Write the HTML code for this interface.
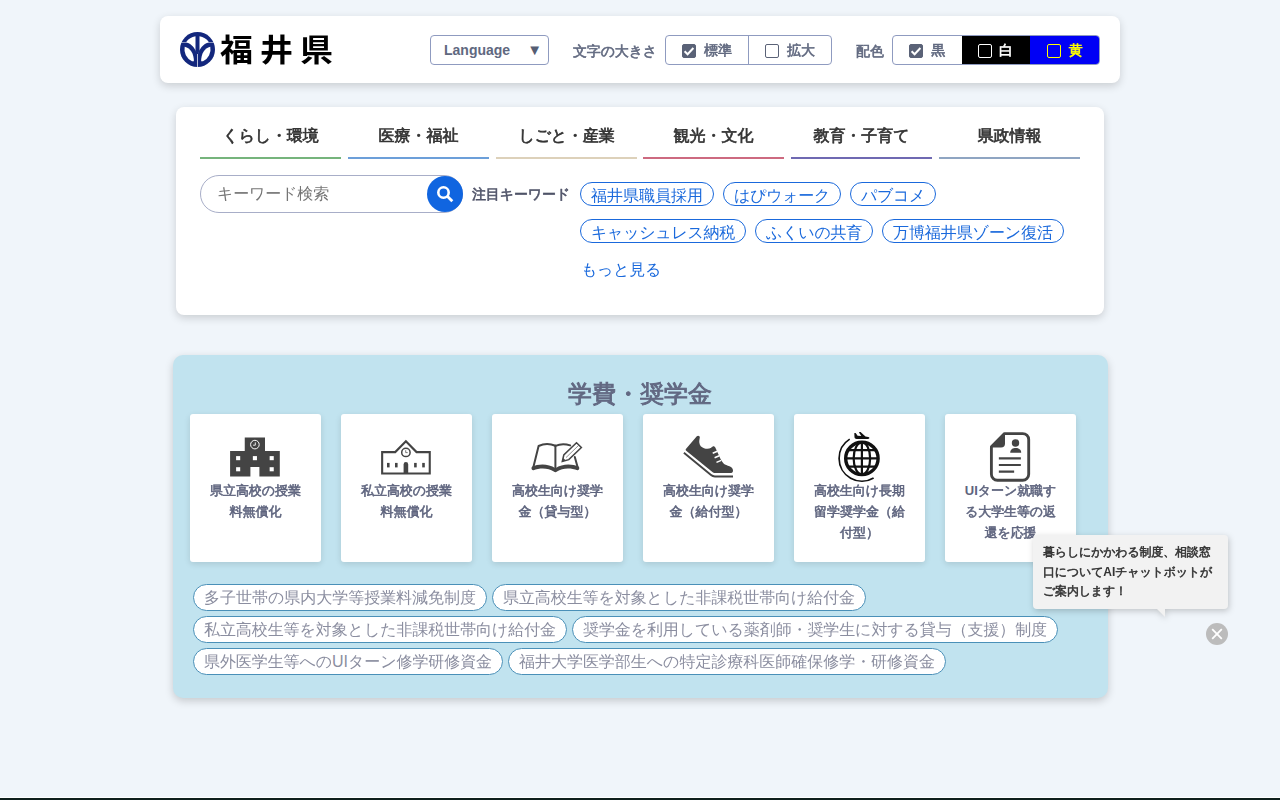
<!DOCTYPE html>
<html>
<head>
<meta charset="utf-8">
<title>学費・奨学金 | 福井県</title>
<style>
*{box-sizing:border-box;margin:0;padding:0}
html,body{width:1280px;height:800px;overflow:hidden}
body{background:#f0f5fa;font-family:"Liberation Sans","WenQuanYi Zen Hei",sans-serif;color:#333;position:relative}
a{text-decoration:none;color:inherit}
.abs{position:absolute}
/* header */
#hdr{position:absolute;left:160px;top:16px;width:960px;height:67px;background:#fff;border-radius:8px;box-shadow:0 3px 8px rgba(0,0,0,.16)}
#logo-mark{position:absolute;left:20px;top:15.5px;width:35px;height:35px}
#logo-text{font-family:"Liberation Sans","Noto Sans CJK JP",sans-serif;position:absolute;left:60px;top:11px;font-size:33px;line-height:48px;font-weight:bold;color:#000;letter-spacing:7px;white-space:nowrap;transform:scaleY(.935);transform-origin:50% 50%}
#lang{position:absolute;left:270px;top:19px;width:119px;height:30px;border:1px solid #8f9bc0;border-radius:4px;background:#fff;font-size:14px;font-weight:bold;color:#60687f;line-height:28px;padding-left:13px}
#lang .arr{position:absolute;right:6px;top:0;font-size:15px;color:#555e73}
.hlabel{position:absolute;top:24px;font-size:14px;line-height:22px;font-weight:normal;-webkit-text-stroke:.589px currentColor;color:#60687f;white-space:nowrap}
.grp{position:absolute;top:19px;height:30px;border:1px solid #8f9bc0;border-radius:4px;background:#fff;display:flex;overflow:hidden}
.grp .opt{padding-top:1px;height:100%;display:flex;align-items:center;justify-content:center;font-size:14px;font-weight:normal;-webkit-text-stroke:.589px currentColor;color:#60687f;white-space:nowrap}
.cb{display:inline-block;width:14px;height:14px;border:1px solid #5a6277;border-radius:2px;margin-right:8px;position:relative;flex:none}
.cb.on{background:#5a6277}
.cb.on svg{position:absolute;left:-1px;top:-1px;width:14px;height:14px}
/* nav */
#nav{position:absolute;left:176px;top:107px;width:928px;height:208px;background:#fff;border-radius:8px;box-shadow:0 3px 8px rgba(0,0,0,.16)}
.tab{position:absolute;top:14px;width:141px;height:38px;border-bottom:2px solid #999;text-align:center;font-size:16px;line-height:30px;font-weight:normal;-webkit-text-stroke:.661px currentColor;color:#333;white-space:nowrap}
#search{position:absolute;left:24px;top:68px;width:263px;height:38px;border:1px solid #a8aec8;border-radius:19px;background:#fff}
#search span{position:absolute;left:16px;top:6px;font-size:16px;line-height:24px;color:#757575}
#sbtn{position:absolute;left:251px;top:69px;width:36px;height:36px;border-radius:50%;background:#1065e0}
#kwl{position:absolute;left:296px;top:76px;font-size:14px;line-height:22px;font-weight:normal;-webkit-text-stroke:.589px currentColor;color:#4f5368;white-space:nowrap}
.kw{position:absolute;height:24px;border:1px solid #1a69dc;border-radius:12px;color:#1a69dc;font-size:16px;line-height:25px;padding:0 10px;white-space:nowrap;background:#fff}
#more{position:absolute;left:405px;top:150.500px;font-size:16px;line-height:24px;color:#1a69dc}
/* section */
#sec{position:absolute;left:173px;top:355px;width:935px;height:343px;background:#c1e3ef;border-radius:10px;box-shadow:0 3px 8px rgba(0,0,0,.18)}
#sec h1{position:absolute;left:-.5px;top:22.200px;width:100%;text-align:center;font-size:24px;line-height:34px;font-weight:normal;-webkit-text-stroke:.913px currentColor;color:#626882}
.card{position:absolute;top:59px;width:131px;height:148px;background:#fff;border-radius:3px;box-shadow:0 2px 6px rgba(0,0,0,.12)}
.card svg{position:absolute;left:0;top:0;width:131px;height:148px}
.card p{position:absolute;left:14px;top:67.200px;width:103px;text-align:center;font-size:13px;line-height:20.800px;font-weight:normal;-webkit-text-stroke:.553px currentColor;color:#5e647e}
.tag{position:absolute;height:27px;margin-top:-1px;border:1px solid #4a90b8;border-radius:13.500px;background:#fff;color:#8b8ea0;font-size:16px;line-height:26px;padding:0 10px;white-space:nowrap}
/* chatbot */
#tip{position:absolute;left:1033px;top:535px;width:195px;height:74px;background:#f2f2f2;border-radius:4px;filter:drop-shadow(1.500px 2px 3px rgba(0,0,0,.2));padding:8px 10px 0;font-size:12px;line-height:19.600px;font-weight:normal;-webkit-text-stroke:.530px currentColor;color:#333}
#tip:after{content:"";position:absolute;left:124px;top:74px;width:8px;height:8px;background:#f2f2f2;clip-path:polygon(0 0,100% 0,100% 100%)}
#close{position:absolute;left:1206px;top:623px;width:22px;height:22px;border-radius:50%;background:#bcbcbc}
#foot{position:absolute;left:0;top:797px;width:1280px;height:3px;background:#0e1f1c;border-top:1px solid #fff}
b.l{font-weight:bold;-webkit-text-stroke:0;letter-spacing:0}
</style>
</head>
<body>
<div id="hdr">
  <svg id="logo-mark" viewBox="0 0 35 35"><circle cx="17.5" cy="17.5" r="17.5" fill="#13277d"/><g fill="#fff"><path id="lw" d="M0.8 10 L6.2 10 A13.5 13.5 0 0 1 15.5 4.15 L15.5 18 L17.3 22.6 C16 18 12 11.3 6 10.5 L0.8 10.5 Z"/><path id="lh" d="M4.7 14.7 C10.5 15.8 14 22 13.9 29.3 L12 29.3 A13.3 13.3 0 0 1 4.7 14.7 Z"/><path d="M34.2 10 L28.8 10 A13.5 13.5 0 0 0 19.5 4.15 L19.5 18 L17.7 22.6 C19 18 23 11.3 29 10.5 L34.2 10.5 Z"/><path d="M30.3 14.7 C24.5 15.8 21 22 21.1 29.3 L23 29.3 A13.3 13.3 0 0 0 30.3 14.7 Z"/><rect x="17.15" y="22" width="0.7" height="13"/></g></svg>
  <div id="logo-text">福井県</div>
  <div id="lang">Language<span class="arr">▼</span></div>
  <div class="hlabel" style="letter-spacing:-0.0117em;left:413px">文字の大きさ</div>
  <div class="grp" style="left:505px;width:167px">
    <div class="opt" style="width:83px;border-right:1px solid #8f9bc0"><span class="cb on"><svg viewBox="0 0 14 14"><path d="M2.6 7.2l3 3 5.8-6.2" fill="none" stroke="#fff" stroke-width="2"/></svg></span>標準</div>
    <div class="opt" style="width:82px"><span class="cb"></span>拡大</div>
  </div>
  <div class="hlabel" style="left:696px">配色</div>
  <div class="grp" style="left:732px;width:208px">
    <div class="opt" style="width:69px"><span class="cb on"><svg viewBox="0 0 14 14"><path d="M2.6 7.2l3 3 5.8-6.2" fill="none" stroke="#fff" stroke-width="2"/></svg></span>黒</div>
    <div class="opt" style="width:69px;background:#000;color:#fff"><span class="cb" style="border-color:#fff;margin-right:7px;margin-left:-1px"></span>白</div>
    <div class="opt" style="width:69px;background:#0000f5;color:#ff0"><span class="cb" style="border-color:#ff0"></span>黄</div>
  </div>
</div>

<div id="nav">
  <div class="tab" style="letter-spacing:-0.0117em;left:24px;border-color:#76b47c">くらし・環境</div>
  <div class="tab" style="left:172px;border-color:#6c9fd9">医療・福祉</div>
  <div class="tab" style="letter-spacing:-0.0117em;left:320px;border-color:#ddd1ba">しごと・産業</div>
  <div class="tab" style="left:467px;border-color:#cd6a80">観光・文化</div>
  <div class="tab" style="letter-spacing:-0.0039em;left:615px;border-color:#6f69b2">教育・子育て</div>
  <div class="tab" style="left:763px;border-color:#8fa5c2">県政情報</div>
  <div id="search"><span style="letter-spacing:-0.0100em">キーワード検索</span></div>
  <div id="sbtn"><svg viewBox="0 0 36 36" width="36" height="36"><circle cx="16.5" cy="16.5" r="5.2" fill="none" stroke="#fff" stroke-width="2.6"/><path d="M20.3 20.3l5 5" stroke="#fff" stroke-width="2.800" stroke-linecap="butt"/></svg></div>
  <div id="kwl" style="letter-spacing:-0.0100em">注目キーワード</div>
  <a class="kw" style="left:404px;top:75px">福井県職員採用</a>
  <a class="kw" style="letter-spacing:-0.0195em;left:547px;top:75px">はぴウォーク</a>
  <a class="kw" style="letter-spacing:-0.0234em;left:674px;top:75px">パブコメ</a>
  <a class="kw" style="letter-spacing:-0.0182em;left:404px;top:112px">キャッシュレス納税</a>
  <a class="kw" style="letter-spacing:-0.0156em;left:579px;top:112px">ふくいの共育</a>
  <a class="kw" style="letter-spacing:-0.0047em;left:706px;top:112px">万博福井県ゾーン復活</a>
  <a id="more" style="letter-spacing:-0.0187em">もっと見る</a>
</div>

<div id="sec">
  <h1>学費・奨学金</h1>
  <a class="card" style="left:17px"><svg viewBox="0 0 131 148"><path fill="#444" d="M54.75 23.4h20.25v13.5h14.8v25.5h-20.4v-9.4h-9v9.4h-20.3v-25.5h14.65z"/><g fill="#fff"><rect x="46.1" y="42.1" width="4.1" height="4.1"/><rect x="62.85" y="42.1" width="4.1" height="4.1"/><rect x="79.65" y="42.1" width="4.1" height="4.1"/><rect x="46.1" y="53.2" width="4.1" height="4.1"/><rect x="79.65" y="53.2" width="4.1" height="4.1"/></g><circle cx="64.9" cy="30.6" r="4.3" fill="none" stroke="#fff" stroke-width="1"/><path d="M65.3 28.4v2.8h-2.2" fill="none" stroke="#fff" stroke-width=".9"/></svg><p style="letter-spacing:-0.0021em">県立高校の授業料無償化</p></a>
  <a class="card" style="left:168px"><svg viewBox="0 0 131 148"><path fill="none" stroke="#444" stroke-width="2.1" stroke-linejoin="miter" d="M41.15 38.1h13.1l10.65-10.9 10.65 10.9h13.2v21.35h-47.6z"/><circle cx="64.9" cy="38.4" r="4.2" fill="#fff" stroke="#444" stroke-width="1.5"/><path d="M64.7 36.2v2.4h2" fill="none" stroke="#444" stroke-width=".7"/><g fill="#444"><rect x="46" y="48.9" width="2.6" height="4.5"/><rect x="54" y="48.9" width="2.6" height="4.5"/><rect x="73.1" y="48.9" width="2.6" height="4.5"/><rect x="81.2" y="48.9" width="2.6" height="4.5"/><path d="M62.6 59.6v-9.2a2.3 2.3 0 0 1 4.6 0v9.2z"/></g></svg><p style="letter-spacing:-0.0021em">私立高校の授業料無償化</p></a>
  <a class="card" style="left:319px"><svg viewBox="0 0 131 148"><g fill="none" stroke="#444" stroke-width="2" stroke-linejoin="round" stroke-linecap="round"><path d="M63.4 31.8C58 29.6 51 30 46.6 32L41.4 53"/><path d="M63.4 31.8C68 29.8 74 29.9 78.2 31.4"/><path d="M82.8 43l2.9 10.4"/><path d="M63.4 31.8v24"/></g><path fill="#444" d="M40.3 52.6c6-3 16-3.4 23.1 1.6 7.1-5 17.1-4.600 23.100-1.600 1.400 1 .8 4-1.200 3.600-6-2.400-15-2.600-20.300 1.400-1 .8-2.200.8-3.200 0-5.300-4-14.300-3.800-20.300-1.400-2 .4-2.600-2.600-1.200-3.600z"/><path fill="#fff" stroke="#444" stroke-width="1.5" stroke-linejoin="miter" d="M84.500 28.800l4.900 4.700-12.600 12.100-6.500 1.900 1.500-6.500z"/><path d="M74 43.600l12.600-12.200" stroke="#444" stroke-width=".6" fill="none"/><path fill="#444" d="M70.300 47.500l.9-3.500 2.600 2.500z"/></svg><p style="letter-spacing:-0.0018em">高校生向け奨学金（貸与型）</p></a>
  <a class="card" style="left:470px"><svg viewBox="0 0 131 148"><path fill="#444" d="M53.800 22.300c1.200-1.200 3.200-.4 3 1.300-.4 2.400-.6 3.400-.5 4.900.3 3 2 4.800 4.700 5.700 2.600.9 5.300.7 7.200-.5 1-.7 1.800-1.500 2.900-1.300.6.100.9.500 1.200 1.100l3.900 8.600c1.400 3 2.400 5.500 4.400 7.300 1.600 1.400 3.700 2 5.900 2.800 2.200.8 3.500 2.400 3.500 4.300 0 1.500-.6 2.500-1.900 2.500h-16.600c-.700 0-1.300-.200-1.800-.700l-26.500-21.600c-.7-.6-.7-1.400-.100-2z"/><g stroke="#fff" stroke-width="1.500" fill="none"><path d="M69.700 39.200l4.700-2"/><path d="M71.600 43.700l4.700-2"/><path d="M73.500 48.400l4.700-2"/></g><path d="M40.9 38.700l26.800 22.100c1.300 1.100 2.500 1.700 4.200 1.700h18.100" fill="none" stroke="#444" stroke-width="1.900"/></svg><p style="letter-spacing:-0.0018em">高校生向け奨学金（給付型）</p></a>
  <a class="card" style="left:621px"><svg viewBox="0 0 131 148"><g fill="none" stroke="#111"><circle cx="67.900" cy="44.400" r="16.200" stroke-width="3.400"/><ellipse cx="67.900" cy="44.400" rx="8.250" ry="16" stroke-width="2.200"/><path d="M67.900 28.400v32M51.800 44.400h32.200M54.500 36.100h26.800M54.500 52.700h26.800" stroke-width="2.200"/><path d="M55.700 25.100A22.800 22.800 0 0 0 45.100 44.400A22.800 22.800 0 0 0 79.600 64" stroke-width="1.700"/></g><path fill="#111" d="M60.300 19.300c.5-.4 1.300-.4 1.700.1l1.600 2.400 3.700.3-2.300-3.600c.6-.5 1.500-.6 2.100-.1l4.400 4.100 2.700.400c1.200.2 1.800 1.200.600 1.800-.7.300-1.600.3-2.500.3h-9.700c-1.200 0-1.900-.6-2.100-1.700z"/></svg><p style="letter-spacing:-0.0014em">高校生向け長期留学奨学金（給付型）</p></a>
  <a class="card" style="left:772px"><svg viewBox="0 0 131 148"><path fill="none" stroke="#444" stroke-width="2.850" stroke-linejoin="round" d="M59.500 19.550h18.200a6 6 0 0 1 6 6v34.650a6 6 0 0 1-6 6h-25.300a6 6 0 0 1-6-6v-27.500z"/><path fill="#444" d="M60 19v10.400a4 4 0 0 1-4 4h-10.500z"/><circle cx="70.500" cy="29" r="3.700" fill="#444"/><path fill="#444" d="M65.250 38.750c-.6-6.500 11.500-6.500 10.900 0z"/><path d="M53.850 44.400h22M53.850 51h22M53.850 57.650h15.300" stroke="#444" stroke-width="2.200" fill="none"/></svg><p style="letter-spacing:-0.0074em"><b class="l">UI</b>ターン就職する大学生等の返還を応援</p></a>
  <a class="tag" style="letter-spacing:-0.0014em;left:20px;top:230px">多子世帯の県内大学等授業料減免制度</a>
  <a class="tag" style="letter-spacing:-0.0053em;left:319px;top:230px">県立高校生等を対象とした非課税世帯向け給付金</a>
  <a class="tag" style="letter-spacing:-0.0053em;left:20px;top:262px">私立高校生等を対象とした非課税世帯向け給付金</a>
  <a class="tag" style="letter-spacing:-0.0065em;left:399px;top:262px">奨学金を利用している薬剤師・奨学生に対する貸与（支援）制度</a>
  <a class="tag" style="letter-spacing:-0.0049em;left:20px;top:294px">県外医学生等へのUIターン修学研修資金</a>
  <a class="tag" style="letter-spacing:-0.0018em;left:335px;top:294px">福井大学医学部生への特定診療科医師確保修学・研修資金</a>
</div>

<div id="tip" style="letter-spacing:-0.0149em">暮らしにかかわる制度、相談窓口について<b class="l">AI</b>チャットボットがご案内します！</div>
<div id="close"><svg viewBox="0 0 22 22" width="22" height="22"><path d="M6.200 6.200l9.600 9.600M15.800 6.200L6.200 15.800" stroke="#fff" stroke-width="1.800"/></svg></div>
<div id="foot"></div>
</body>
</html>
